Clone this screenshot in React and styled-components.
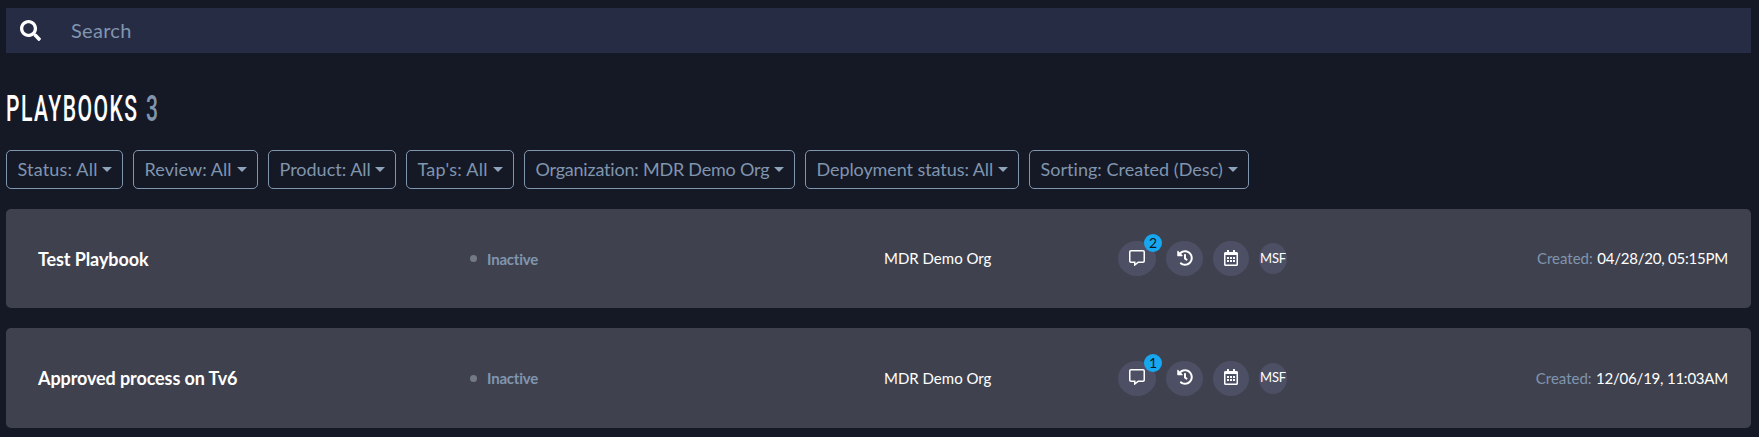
import React from "react";
import styled, { createGlobalStyle } from "styled-components";
import { FaSearch, FaRegCommentAlt, FaHistory, FaRegCalendarAlt } from "react-icons/fa";

const GlobalStyle = createGlobalStyle`
  * { box-sizing: border-box; }
  body {
    margin: 0;
    background: #151926;
    color: #fff;
    font-family: Lato, "Open Sans", sans-serif;
    font-variant-ligatures: none;
    overflow: hidden;
  }
`;

const Page = styled.main`
  height: 437px;
  padding: 8px 8px 0 6px;
  display: flex;
  flex-direction: column;
`;

const SearchBar = styled.label`
  flex: none;
  height: 45px;
  padding-left: 14px;
  display: flex;
  align-items: center;
  gap: 30px;
  background: #272c45;
  svg { width: 21px; height: 21px; flex: none; }
`;

const SearchInput = styled.input`
  flex: 1;
  border: 0;
  padding: 0 0 2px;
  outline: 0;
  background: transparent;
  color: #fff;
  font: 400 20px/28px Lato, sans-serif;
  letter-spacing: 0.3px;
  &::placeholder { color: #8095ae; opacity: 1; }
`;

const Heading = styled.h1`
  flex: none;
  margin: 34px 0 0;
  height: 44px;
  width: max-content;
  display: flex;
  gap: 13px;
  font: 500 37px/44px Roboto, sans-serif;
  letter-spacing: 2.6px;
  transform: scaleX(0.57);
  transform-origin: left center;
`;

const Count = styled.span`
  color: #8095ae;
`;

const Filters = styled.div`
  flex: none;
  margin-top: 19px;
  display: flex;
  gap: 10px;
`;

const FilterButton = styled.button`
  width: ${(p) => p.$width}px;
  height: 39px;
  padding: 0 10px 1px 10.5px;
  display: flex;
  align-items: center;
  justify-content: space-between;
  border: 1px solid #8095ae;
  border-radius: 5px;
  background: transparent;
  color: #8095ae;
  font: 400 18px/26px Lato, sans-serif;
  letter-spacing: ${(p) => p.$tracking || 0}px;
  white-space: nowrap;
`;

const Caret = styled.i`
  border: 5.5px solid transparent;
  border-top: 5px solid #8ea2b8;
  border-bottom: 0;
`;

const List = styled.section`
  margin-top: 20px;
  display: flex;
  flex-direction: column;
  gap: 20px;
`;

const Card = styled.article`
  height: ${(p) => p.$height}px;
  padding: 0 23px 0 32px;
  display: grid;
  grid-template-columns: 432px 414px 234px auto 1fr;
  align-items: center;
  border-radius: 5px;
  background: #3f424e;
  font-size: 15px;
  line-height: 22px;
  white-space: nowrap;
`;

const Name = styled.h2`
  margin: 0;
  font-size: 18px;
  line-height: 26px;
  font-weight: 700;
  letter-spacing: -0.1px;
`;

const Status = styled.div`
  display: flex;
  align-items: center;
  gap: 10px;
  color: #8095ae;
  font-weight: 700;
  letter-spacing: -0.2px;
  &::before {
    content: "";
    width: 7px;
    height: 7px;
    border-radius: 50%;
    background: #737985;
  }
`;

const Organization = styled.div`
  padding-bottom: 1px;
`;

const Actions = styled.div`
  display: flex;
  align-items: center;
  gap: 10px;
`;

const Round = styled.div`
  position: relative;
  width: ${(p) => p.$width}px;
  height: 35px;
  display: flex;
  align-items: center;
  justify-content: center;
  padding-bottom: 2px;
  border-radius: 50%;
  background: #4d5065;
  svg { width: 16px; height: 16px; }
`;

const Badge = styled.span`
  position: absolute;
  top: -7px;
  right: -6px;
  width: 18px;
  height: 18px;
  border-radius: 50%;
  background: #17a7f0;
  color: #101623;
  font-size: 14px;
  line-height: 17px;
  text-align: center;
`;

const Tag = styled.div`
  width: 28px;
  height: 31px;
  display: flex;
  align-items: center;
  justify-content: center;
  padding-bottom: 2px;
  border-radius: 50%;
  background: #4d5065;
  font-size: 13px;
  letter-spacing: -0.15px;
`;

const Created = styled.div`
  justify-self: end;
  display: flex;
  gap: 4.5px;
  padding-bottom: 1px;
`;

const CreatedLabel = styled.span`
  color: #8095ae;
`;

const CreatedDate = styled.time`
  letter-spacing: -0.22px;
`;

const filters = [
  { label: "Status: All", width: 117, tracking: 0.18 },
  { label: "Review: All", width: 125, tracking: 0.08 },
  { label: "Product: All", width: 128, tracking: 0 },
  { label: "Tap's: All", width: 108, tracking: 0.25 },
  { label: "Organization: MDR Demo Org", width: 271, tracking: -0.21 },
  { label: "Deployment status: All", width: 214, tracking: -0.08 },
  { label: "Sorting: Created (Desc)", width: 220, tracking: 0.03 },
];

const playbooks = [
  { name: "Test Playbook", comments: 2, created: "04/28/20, 05:15PM", height: 99 },
  { name: "Approved process on Tv6", comments: 1, created: "12/06/19, 11:03AM", height: 100 },
];

export default function App() {
  return (
    <>
      <GlobalStyle />
      <Page>
        <SearchBar>
          <FaSearch />
          <SearchInput placeholder="Search" />
        </SearchBar>
        <Heading>
          PLAYBOOKS <Count>3</Count>
        </Heading>
        <Filters>
          {filters.map((f) => (
            <FilterButton key={f.label} $width={f.width} $tracking={f.tracking}>
              {f.label}
              <Caret />
            </FilterButton>
          ))}
        </Filters>
        <List>
          {playbooks.map((p) => (
            <Card key={p.name} $height={p.height}>
              <Name>{p.name}</Name>
              <Status>Inactive</Status>
              <Organization>MDR Demo Org</Organization>
              <Actions>
                <Round $width={38}>
                  <FaRegCommentAlt />
                  <Badge>{p.comments}</Badge>
                </Round>
                <Round $width={37}>
                  <FaHistory />
                </Round>
                <Round $width={36}>
                  <FaRegCalendarAlt />
                </Round>
                <Tag>MSF</Tag>
              </Actions>
              <Created>
                <CreatedLabel>Created:</CreatedLabel>
                <CreatedDate>{p.created}</CreatedDate>
              </Created>
            </Card>
          ))}
        </List>
      </Page>
    </>
  );
}
